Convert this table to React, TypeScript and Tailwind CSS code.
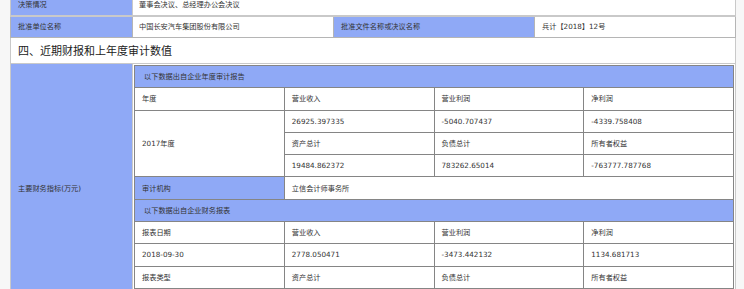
const FONT = '"DejaVu Sans", "Noto Sans CJK SC", sans-serif'

const ANNUAL = [
  ['年度', '营业收入', '营业利润', '净利润'],
]

// last row sits below the fold, its cells are left blank
const REPORT = [
  ['报表日期', '营业收入', '营业利润', '净利润'],
  ['2018-09-30', '2778.050471', '-3473.442132', '1134.681713'],
  ['报表类型', '资产总计', '负债总计', '所有者权益'],
  ['', '', '', ''],
]

const cell = 'border border-[#858585] h-[22.3px] px-[7px] align-middle'

export default function App() {
  return (
    <div
      className="w-[744px] h-[289px] overflow-hidden bg-[#f7f7f7] pl-[10px] text-[#333] text-[7.2px] leading-none"
      style={{ fontFamily: FONT }}
    >
      <table className="mt-[-7px] w-[725px] table-fixed border-collapse bg-white">
        <colgroup>
          <col className="w-[122px]" />
          <col className="w-[201px]" />
          <col className="w-[201px]" />
          <col className="w-[201px]" />
        </colgroup>
        <tbody>
          <tr className="h-[22px]">
            <td className="border border-[#c9c9c9] border-b-2 bg-[#8fa9f6] px-[7px]">决策情况</td>
            <td colSpan={3} className="border border-[#c9c9c9] border-b-2 px-[6px]">董事会决议、总经理办公会决议</td>
          </tr>
          <tr className="h-[22px]">
            <td className="border border-[#b5b5b5] bg-[#8fa9f6] px-[7px]">批准单位名称</td>
            <td className="border border-[#b5b5b5] px-[6px]">中国长安汽车集团股份有限公司</td>
            <td className="border border-[#b5b5b5] bg-[#8fa9f6] px-[7px]">批准文件名称或决议名称</td>
            <td className="border border-[#b5b5b5] px-[7px]">兵计【2018】12号</td>
          </tr>
          <tr className="h-[26px]">
            <td colSpan={4} className="border border-[#c9c9c9] px-[7px] pt-[1px] text-[11px] text-[#222]">
              四、近期财报和上年度审计数值
            </td>
          </tr>
          <tr>
            <td className="border border-[#c9c9c9] bg-[#8fa9f6] px-[7px] align-middle">主要财务指标(万元)</td>
            <td colSpan={3} className="border border-[#c9c9c9] p-[1px]">
              <table className="w-full table-fixed border-collapse border border-[#5f5f5f]">
                <tbody>
                  <tr>
                    <td colSpan={4} className={`${cell} bg-[#8fa9f6] px-[9px]`}>以下数据出自企业年度审计报告</td>
                  </tr>
                  {ANNUAL.map((r) => (
                    <tr key={r[0]}>
                      {r.map((c, i) => (
                        <td key={i} className={cell}>{c}</td>
                      ))}
                    </tr>
                  ))}
                  <tr>
                    <td rowSpan={3} className={cell}>2017年度</td>
                    <td className={cell}>26925.397335</td>
                    <td className={cell}>-5040.707437</td>
                    <td className={cell}>-4339.758408</td>
                  </tr>
                  <tr>
                    <td className={cell}>资产总计</td>
                    <td className={cell}>负债总计</td>
                    <td className={cell}>所有者权益</td>
                  </tr>
                  <tr>
                    <td className={cell}>19484.862372</td>
                    <td className={cell}>783262.65014</td>
                    <td className={cell}>-763777.787768</td>
                  </tr>
                  <tr>
                    <td className={`${cell} bg-[#8fa9f6]`}>审计机构</td>
                    <td colSpan={3} className={cell}>立信会计师事务所</td>
                  </tr>
                  <tr>
                    <td colSpan={4} className={`${cell} bg-[#8fa9f6] px-[9px]`}>以下数据出自企业财务报表</td>
                  </tr>
                  {REPORT.map((r, ri) => (
                    <tr key={ri}>
                      {r.map((c, i) => (
                        <td key={i} className={cell}>{c}</td>
                      ))}
                    </tr>
                  ))}
                </tbody>
              </table>
            </td>
          </tr>
        </tbody>
      </table>
    </div>
  )
}
